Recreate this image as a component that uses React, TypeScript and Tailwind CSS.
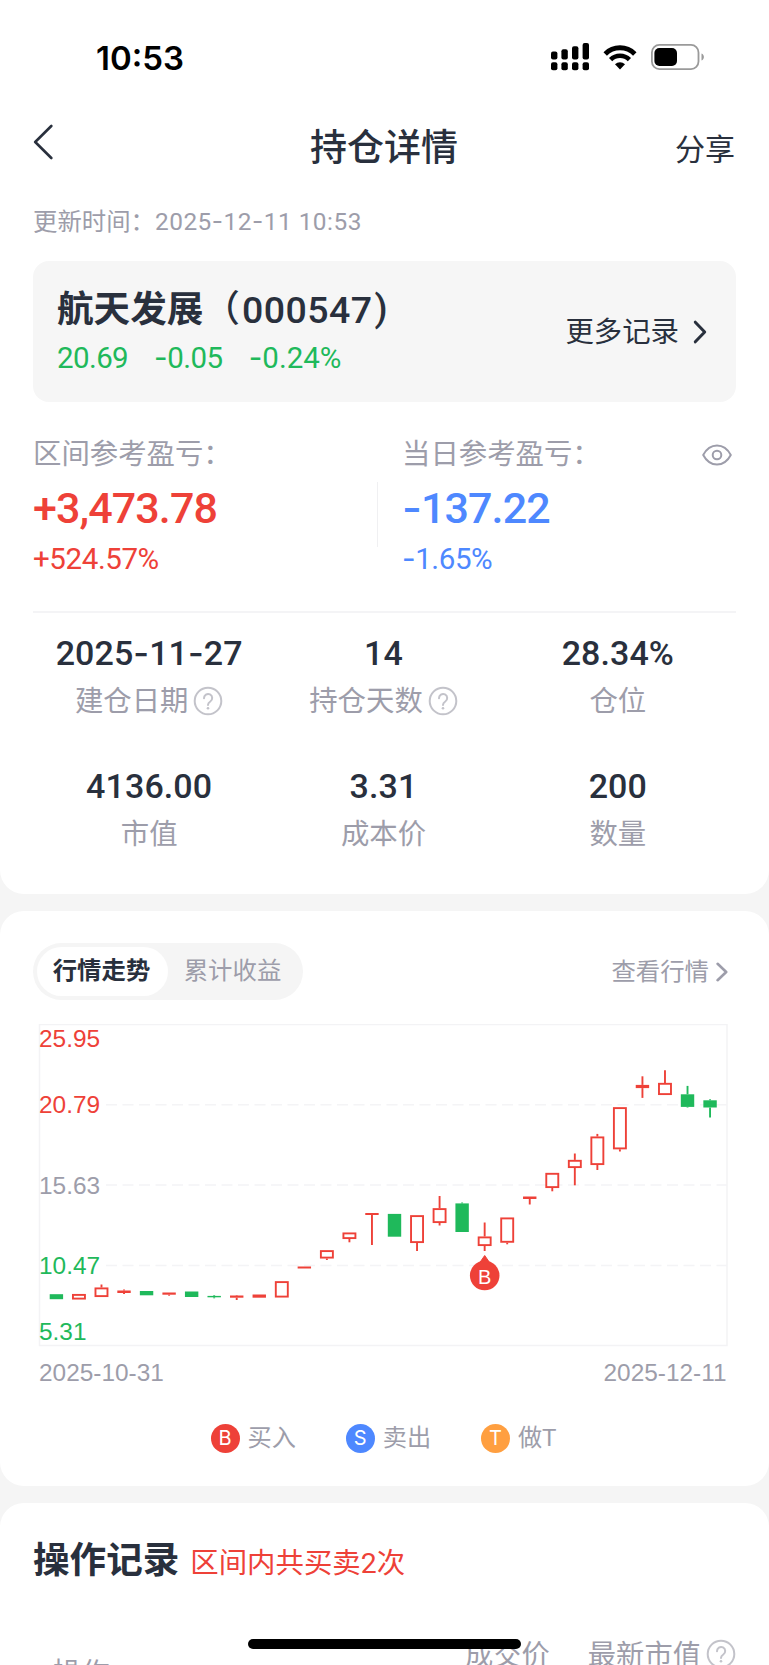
import { Fragment } from "react";
import clsx from "clsx";

type Candle = {
  kind: "up" | "down" | "flat";
  top: number;
  bottom: number;
  high?: number;
  low?: number;
};

const stats = [
  { value: "2025-11-27", label: "建仓日期", help: true },
  { value: "14", label: "持仓天数", help: true },
  { value: "28.34%", label: "仓位" },
  { value: "4136.00", label: "市值" },
  { value: "3.31", label: "成本价" },
  { value: "200", label: "数量" },
];

const legend = [
  { mark: "B", label: "买入", color: "bg-[#ee4138]" },
  { mark: "S", label: "卖出", color: "bg-[#4e88ff]" },
  { mark: "T", label: "做T", color: "bg-[#ff9f40]" },
];

// y values are in chart space (0 = top border)
const candles: Candle[] = [
  { kind: "down", top: 269.7, bottom: 274.7 },
  { kind: "up", top: 269.5, bottom: 275 },
  { kind: "up", top: 263, bottom: 272.5, high: 260 },
  { kind: "flat", top: 266, bottom: 268.5, high: 265, low: 269.5 },
  { kind: "down", top: 266.5, bottom: 270.8 },
  { kind: "flat", top: 268, bottom: 270.2, low: 271.2 },
  { kind: "down", top: 267, bottom: 272.5 },
  { kind: "down", top: 271.4, bottom: 272.8, high: 270.7, low: 273.8 },
  { kind: "flat", top: 271, bottom: 273.2, high: 270.5, low: 275.5 },
  { kind: "flat", top: 270, bottom: 273.2 },
  { kind: "up", top: 256.7, bottom: 273 },
  { kind: "flat", top: 242, bottom: 244 },
  { kind: "up", top: 225.7, bottom: 234, low: 235.5 },
  { kind: "up", top: 208, bottom: 214.5, low: 217.8 },
  { kind: "flat", top: 188.5, bottom: 190.5, low: 220.5 },
  { kind: "down", top: 189.4, bottom: 212.2 },
  { kind: "up", top: 190.7, bottom: 218.5, low: 226.5 },
  { kind: "up", top: 183.7, bottom: 198.5, high: 171.5, low: 201 },
  { kind: "down", top: 178.9, bottom: 207.5, high: 178 },
  { kind: "up", top: 212, bottom: 221.5, high: 198, low: 226.5 },
  { kind: "up", top: 193, bottom: 218.2, low: 219.8 },
  { kind: "flat", top: 172, bottom: 174.5, low: 180 },
  { kind: "up", top: 148.4, bottom: 163.5, low: 166.8 },
  { kind: "up", top: 135.4, bottom: 143.5, high: 129, low: 160.8 },
  { kind: "up", top: 112, bottom: 140.5, high: 109.4, low: 145.5 },
  { kind: "up", top: 82.7, bottom: 124.8, low: 127 },
  { kind: "flat", top: 60.4, bottom: 63.6, high: 51.8, low: 73.4 },
  { kind: "up", top: 58.4, bottom: 70.5, high: 45.8 },
  { kind: "down", top: 69.8, bottom: 82.4, high: 61.4, low: 83 },
  { kind: "down", top: 75.8, bottom: 83, high: 74.8, low: 93 },
];

const axis = [
  { text: "25.95", y: 22.7, color: "#ee4138" },
  { text: "20.79", y: 88.5, color: "#ee4138" },
  { text: "15.63", y: 169.2, color: "#9d9daa" },
  { text: "10.47", y: 249.2, color: "#1fb95b" },
  { text: "5.31", y: 315.5, color: "#1fb95b" },
];

// Figures use a wider dash than Roboto's own hyphen
function Num({ children, className }: { children: string; className?: string }) {
  return (
    <span className={clsx("whitespace-nowrap", className)}>
      {children.split("-").map((part, i) => (
        <Fragment key={i}>
          {i > 0 && <span className="font-['Inter'] leading-[0]">-</span>}
          {part}
        </Fragment>
      ))}
    </span>
  );
}

function Help() {
  return (
    <svg width="30" height="30" viewBox="0 0 30 30" fill="none" stroke="#c3c3ca" className="shrink-0">
      <circle cx="15" cy="15" r="13.3" strokeWidth="2" />
      <path d="M11 12.2a4.1 4.1 0 1 1 6.300 3.300c-1.600 1-2.300 1.600-2.300 3.400" strokeWidth="2" strokeLinecap="round" />
      <circle cx="15" cy="22.2" r="1.3" fill="#c3c3ca" stroke="none" />
    </svg>
  );
}

function StatusBar() {
  return (
    <div className="flex h-[114px] shrink-0 items-center pl-[96px] pr-[65px]">
      <span className="mt-[3px] font-['Inter'] text-[33px] font-semibold text-black">10:53</span>
      <svg className="ml-auto" width="38" height="28" viewBox="0 0 38 28">
        <rect x="0" y="8.5" width="6.4" height="8" rx="2" />
        <rect x="10.4" y="6.2" width="6.4" height="10.3" rx="2" />
        <rect x="21" y="3.2" width="6.4" height="13.3" rx="2" />
        <rect x="31.6" y="0" width="6.4" height="16.5" rx="2" />
        <rect x="0" y="19.2" width="6.4" height="8" rx="2" />
        <rect x="10.4" y="19.2" width="6.4" height="8" rx="2" />
        <rect x="21" y="19.2" width="6.4" height="8" rx="2" />
        <rect x="31.6" y="19.2" width="6.4" height="8" rx="2" />
      </svg>
      <svg className="ml-[14px]" width="34" height="25" viewBox="0 0 34 25" fill="none" stroke="#000">
        <path d="M2.2 8.9a21 21 0 0 1 29.6 0" strokeWidth="4.9" />
        <path d="M7.6 14.6a13.3 13.3 0 0 1 18.8 0" strokeWidth="4.6" />
        <path d="M17 24.5l-5-5.200a7.200 7.200 0 0 1 10 0z" fill="#000" stroke="none" />
      </svg>
      <svg className="ml-[14px]" width="53" height="26" viewBox="0 0 53 26">
        <rect x="0.9" y="0.9" width="46.6" height="24.2" rx="7.5" fill="none" stroke="#9a9a9a" strokeWidth="1.8" />
        <rect x="3.4" y="4" width="22.6" height="18" rx="5" />
        <path d="M50.5 9.5c3.2 1.2 3.2 5.8 0 7z" fill="#9a9a9a" />
      </svg>
    </div>
  );
}

function Header() {
  return (
    <div className="grid h-[66px] shrink-0 grid-cols-[1fr_auto_1fr] items-center pr-[34px] pl-[33px] text-[#29303d]">
      <svg className="-mt-[11px]" width="20" height="36" viewBox="0 0 20 36" fill="none" stroke="currentColor">
        <path d="M18.3 2L2.2 18l16.1 16" strokeWidth="2.6" strokeLinecap="round" strokeLinejoin="round" />
      </svg>
      <h1 className="mt-[2px] text-[37px] leading-none font-medium">持仓详情</h1>
      <span className="mt-[6px] justify-self-end text-[30px] leading-none">分享</span>
    </div>
  );
}

function StockCard() {
  return (
    <div className="mx-[33px] mt-[21px] flex h-[141px] shrink-0 items-center rounded-2xl bg-[#f6f6f6] pr-[27px] pl-6 text-[#29303d]">
      <div className="mt-[6px]">
        <div className="flex h-12 items-center text-[36.6px] leading-none font-bold">
          航天发展<span className="font-medium">（</span>
          <span className="ml-[2px] text-[37.5px] font-medium tracking-[0.45px]">000547</span>
          <span className="mb-1 ml-[2px] text-[37.5px] font-medium">)</span>
        </div>
        <div className="flex h-12 items-center gap-[26px] text-[29.5px] leading-none text-[#1fb95b]">
          <Num className="tracking-[-0.6px]">20.69</Num>
          <Num className="tracking-[-0.5px]">-0.05</Num>
          <Num>-0.24%</Num>
        </div>
      </div>
      <div className="mt-[2px] ml-auto flex items-center gap-3 text-[28.4px] leading-none">
        <span className="mt-px">更多记录</span>
        <svg className="-mt-[2px]" width="18" height="24" viewBox="0 0 18 24" fill="none" stroke="currentColor">
          <path d="M4.3 2.2l9.4 9.8-9.4 9.8" strokeWidth="3" strokeLinecap="round" strokeLinejoin="round" />
        </svg>
      </div>
    </div>
  );
}

function ProfitRow() {
  return (
    <div className="mx-[33px] flex h-[211px] shrink-0 border-b-2 border-[#f4f4f6] pt-[35px]">
      <div className="w-[344px] text-[#ee4138]">
        <p className="h-9 text-[28.4px] leading-9 text-[#9d9daa]">区间参考盈亏：</p>
        <p className="mt-[7px] h-[56px] text-[43px] leading-[56px] font-medium tracking-[-0.9px]">
          <Num>+3,473.78</Num>
        </p>
        <p className="mt-[3px] h-10 text-[29.5px] leading-10 tracking-[-0.4px]">
          <Num>+524.57%</Num>
        </p>
      </div>
      <div className="mt-[45px] h-[65px] w-px bg-[#f0f0f2]" />
      <div className="flex-1 pl-6 text-[#4e88ff]">
        <div className="flex h-9 items-center justify-between pr-1 text-[28.4px] leading-9 text-[#9d9daa]">
          <p>当日参考盈亏：</p>
          <svg width="30" height="22" viewBox="0 0 30 22" fill="none" stroke="currentColor" strokeWidth="2">
            <path d="M1.2 11C4.6 4.6 9.2 1.5 15 1.5S25.4 4.6 28.8 11C25.4 17.4 20.8 20.5 15 20.5S4.6 17.4 1.2 11z" strokeLinejoin="round" />
            <circle cx="15" cy="11" r="4.3" />
          </svg>
        </div>
        <p className="mt-[7px] h-[56px] text-[43px] leading-[56px] font-medium tracking-[-0.9px]">
          <Num>-137.22</Num>
        </p>
        <p className="mt-[3px] h-10 text-[29.5px] leading-10 tracking-[-0.4px]">
          <Num>-1.65%</Num>
        </p>
      </div>
    </div>
  );
}

function StatGrid() {
  return (
    <div className="mr-[34px] ml-8 mt-4 grid grid-cols-3 gap-y-[37px]">
      {stats.map((s) => (
        <div key={s.label} className="flex flex-col items-center">
          <Num className="h-12 text-[34px] leading-[48px] font-medium tracking-[0.1px] text-[#29303d]">{s.value}</Num>
          <div className="flex h-12 items-center text-[28.4px] leading-none text-[#9d9daa]">
            <span className="mt-[2px]">{s.label}</span>
            {s.help && (
              <span className="ml-[5px]">
                <Help />
              </span>
            )}
          </div>
        </div>
      ))}
    </div>
  );
}

function TrendChart() {
  return (
    <svg
      className="mx-[33px] mt-[24px] block font-['Liberation_Sans',sans-serif]"
      width="703"
      height="366"
      viewBox="-6.5 -0.5 703 366"
      fontSize="24.4"
    >
      <rect x="0" y="0" width="687.5" height="321" fill="none" stroke="#f3f3f5" strokeWidth="1.5" />
      {[80.2, 160.6, 241].map((y) => (
        <line key={y} x1="66.5" x2="687.5" y1={y} y2={y} stroke="#f4f4f6" strokeWidth="1.5" strokeDasharray="11 5.5" />
      ))}
      {axis.map((a) => (
        <text key={a.text} x="-0.5" y={a.y} fill={a.color}>
          {a.text}
        </text>
      ))}
      {candles.map((c, i) => {
        const x = 16.9 + i * 22.54;
        const color = c.kind === "down" ? "#1fb95b" : "#ee4138";
        return (
          <g key={i} stroke={color} strokeWidth="1.9">
            {c.high !== undefined && <line x1={x} x2={x} y1={c.high} y2={c.top} />}
            {c.low !== undefined && <line x1={x} x2={x} y1={c.bottom} y2={c.low} />}
            {c.kind === "up" ? (
              <rect x={x - 6} y={c.top + 0.9} width="12" height={c.bottom - c.top - 1.8} fill="#fff" />
            ) : (
              <rect x={x - 6.7} y={c.top} width="13.4" height={c.bottom - c.top} fill={color} stroke="none" />
            )}
          </g>
        );
      })}
      <path d="M445.2 231l5.2 7.5h-10.4z" fill="#ee4138" stroke="#ee4138" strokeLinejoin="round" />
      <circle cx="445.2" cy="251" r="14.8" fill="#ee4138" />
      <text x="445.2" y="259" fontSize="20" fill="#fff" textAnchor="middle">
        B
      </text>
      <text x="-0.5" y="356.3" fill="#9d9daa">
        2025-10-31
      </text>
      <text x="687" y="356.3" fill="#9d9daa" textAnchor="end">
        2025-12-11
      </text>
    </svg>
  );
}

function TrendCard() {
  return (
    <section className="mt-[16.5px] h-[575.5px] shrink-0 rounded-3xl bg-white pt-[32.5px]">
      <div className="mx-[33px] flex h-[57px] items-center text-[24.4px] leading-none">
        <div className="flex h-[57px] items-center rounded-full bg-[#f5f5f5] p-1">
          <button className="h-[49px] w-[131px] rounded-full bg-white pr-[2px] font-bold text-[#29303d]">行情走势</button>
          <button className="h-[49px] w-[131px] pr-[2px] text-[#9d9daa]">累计收益</button>
        </div>
        <a className="ml-auto flex items-center gap-[6px] pr-[7px] text-[#9d9daa]">
          <span className="mt-[2px]">查看行情</span>
          <svg width="14" height="20" viewBox="0 0 14 20" fill="none" stroke="currentColor">
            <path d="M2.6 1.8l8.6 8.2-8.6 8.2" strokeWidth="2.6" strokeLinecap="round" strokeLinejoin="round" />
          </svg>
        </a>
      </div>
      <TrendChart />
      <div className="mt-[31px] flex h-[34px] justify-center pr-[2px]">
        <div className="flex w-[346px] justify-between">
          {legend.map((l) => (
            <div key={l.mark} className="flex items-center gap-[8px] text-[24.2px] leading-none text-[#9d9daa]">
              <span className={clsx("flex size-[29px] items-center justify-center rounded-full font-['Inter'] text-[20px] text-white", l.color)}>
                {l.mark}
              </span>
              <span className="mt-px">{l.label}</span>
            </div>
          ))}
        </div>
      </div>
    </section>
  );
}

function Records() {
  return (
    <section className="mt-[16.5px] h-[200px] shrink-0 rounded-t-3xl bg-white px-[33px] pt-[37px]">
      <div className="flex h-11 items-center gap-[11px]">
        <h2 className="text-[36.6px] leading-none font-bold text-[#29303d]">操作记录</h2>
        <span className="mt-[6px] text-[28.4px] leading-none text-[#ee4138]">区间内共买卖2次</span>
      </div>
      <div className="mt-[55px] flex items-start text-[28.3px] leading-[34px] text-[#9d9daa]">
        <span className="mt-[18px] ml-5">操作</span>
        <span className="ml-auto">成交价</span>
        <span className="ml-[38px]">最新市值</span>
        <span className="ml-[5px]">
          <Help />
        </span>
      </div>
    </section>
  );
}

export default function App() {
  return (
    <div className="relative flex h-[1665px] w-[769px] flex-col overflow-hidden bg-[#f5f5f5] font-['Roboto','Noto_Sans_CJK_SC',sans-serif]">
      <section className="flex h-[894px] shrink-0 flex-col rounded-b-3xl bg-white">
        <StatusBar />
        <Header />
        <p className="mt-6 ml-[33px] h-9 text-[24.4px] leading-9 text-[#9d9daa]">
          更新时间：<Num className="tracking-[0.5px]">2025-12-11 10:53</Num>
        </p>
        <StockCard />
        <ProfitRow />
        <StatGrid />
      </section>
      <TrendCard />
      <Records />
      {/* home indicator */}
      <div className="absolute bottom-4 left-[248px] h-[10px] w-[273px] rounded-full bg-black" />
    </div>
  );
}
